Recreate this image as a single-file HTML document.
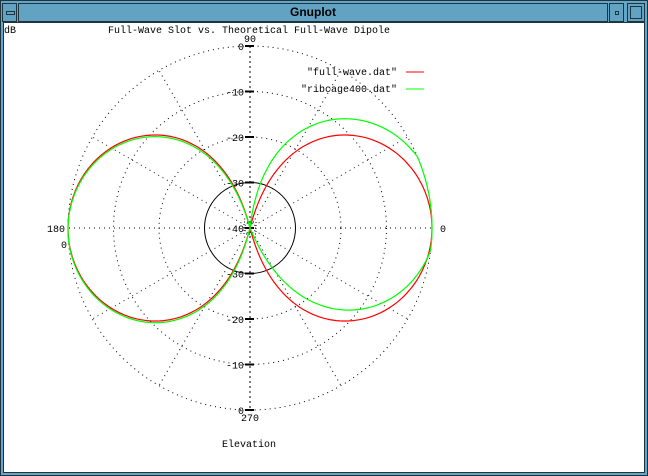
<!DOCTYPE html>
<html><head><meta charset="utf-8"><style>
html,body{margin:0;padding:0;}
body{width:648px;height:476px;position:relative;background:#62a6c8;overflow:hidden;font-family:"Liberation Mono",monospace;}
.frame{position:absolute;left:0;top:0;width:646px;height:474px;border:1px solid #1e3440;background:#62a6c8;}
.tb{position:absolute;left:18px;top:3px;width:588px;height:17px;background:#62a2c2;border:1px solid #1e3440;font:bold 12px "Liberation Sans",sans-serif;text-align:center;line-height:17px;color:#000;}
.btn{position:absolute;top:3px;width:13px;height:17px;background:#62a2c2;border:1px solid #1e3440;}
.content{position:absolute;left:3px;top:22px;width:640px;height:449px;background:#fff;border:1px solid #1e3440;}
svg{position:absolute;left:0;top:0;}
svg text{font-family:"Liberation Mono",monospace;font-size:10px;fill:#000;}
</style></head><body>
<div class="frame"></div>
<div class="btn" style="left:2px"><div style="position:absolute;left:3px;top:7px;width:7px;height:2px;border:1px solid #1e3440"></div></div>
<div class="tb">Gnuplot</div>
<div class="btn" style="left:609px"><div style="position:absolute;left:5px;top:7px;width:2px;height:2px;border:1px solid #1e3440"></div></div>
<div class="btn" style="left:627px;width:16px"><div style="position:absolute;left:2px;top:2px;width:10px;height:11px;border:1px solid #1e3440"></div></div>
<div class="content"></div>
<svg id="s" width="648" height="476" xmlns="http://www.w3.org/2000/svg">
<text x="4" y="33">dB</text>
<text x="108" y="33">Full-Wave Slot vs. Theoretical Full-Wave Dipole</text>
<text x="244" y="42">90</text>
<text x="241" y="421">270</text>
<text x="47" y="232">180</text>
<text x="61" y="248">0</text>
<text x="440" y="232">0</text>
<text x="222" y="447">Elevation</text>
<text x="397" y="75" text-anchor="end">"full-wave.dat"</text>
<text x="397" y="92" text-anchor="end">"ribcage400.dat"</text>
<line x1="406" y1="72" x2="424" y2="72" stroke="#f00" stroke-width="1"/>
<line x1="406" y1="89" x2="424" y2="89" stroke="#0f0" stroke-width="1"/>
</svg>
<script>
var s=document.getElementById('s'),NS='http://www.w3.org/2000/svg';
var cx=250,cy=228,R=182;
function el(n,a){var e=document.createElementNS(NS,n);for(var k in a)e.setAttribute(k,a[k]);s.appendChild(e);return e;}
[1,0.75,0.5].forEach(function(f){el('circle',{cx:cx,cy:cy,r:R*f,fill:'none',stroke:'#000','stroke-width':1,'stroke-dasharray':'1 4'});});
el('circle',{cx:cx,cy:cy,r:R*0.25,fill:'none',stroke:'#000','stroke-width':1});
for(var a=0;a<360;a+=30){if(a==90||a==270)continue;var t=a*Math.PI/180;el('line',{x1:cx,y1:cy,x2:cx+R*Math.cos(t),y2:cy-R*Math.sin(t),stroke:'#000','stroke-width':1,'stroke-dasharray':'1 4'});}
el('line',{x1:cx,y1:cy-R,x2:cx,y2:cy+R,stroke:'#000','stroke-width':1,'stroke-dasharray':'2 3'});
el('rect',{x:cx-6,y:cy-6,width:12,height:12,fill:'none',stroke:'#000','stroke-width':1,'stroke-dasharray':'1 2'});
var labs=['0','-10','-20','-30','-40'];
for(var i=0;i<5;i++){var r=R*(1-i/4);
 [cy-r,cy+r].forEach(function(y,j){if(i==4&&j==1)return;
  el('line',{x1:cx-5,y1:y,x2:cx+4,y2:y,stroke:'#000','stroke-width':2});
  var tx=el('text',{x:cx-6,y:y+4,'text-anchor':'end'});tx.textContent=labs[i];});}
function f(phi){var c=Math.cos(phi);if(Math.abs(c)<1e-6)return 0;return Math.abs((Math.cos(Math.PI*Math.sin(phi))+1)/c)/2;}
function rad(v){var db=20*Math.log10(Math.max(v,1e-6));if(db<-40)db=-40;return R*(1+db/40);}
function curve(col,shift,sc,lshift){var p='';for(var d=0;d<=360;d+=1){var phi=d*Math.PI/180;var right=(d<90||d>270);var sh=right?shift:lshift;var r=rad(f(phi-sh*Math.PI/180));if(right)r=Math.min(R,r*sc);var x=cx+r*Math.cos(phi),y=cy-r*Math.sin(phi);p+=(d?'L':'M')+x.toFixed(1)+' '+y.toFixed(1);}
 el('path',{d:p,fill:'none',stroke:col,'stroke-width':1.2});}
curve('#f00',0,1,0);
curve('#0f0',8,1.03,1);
</script>
</body></html>
